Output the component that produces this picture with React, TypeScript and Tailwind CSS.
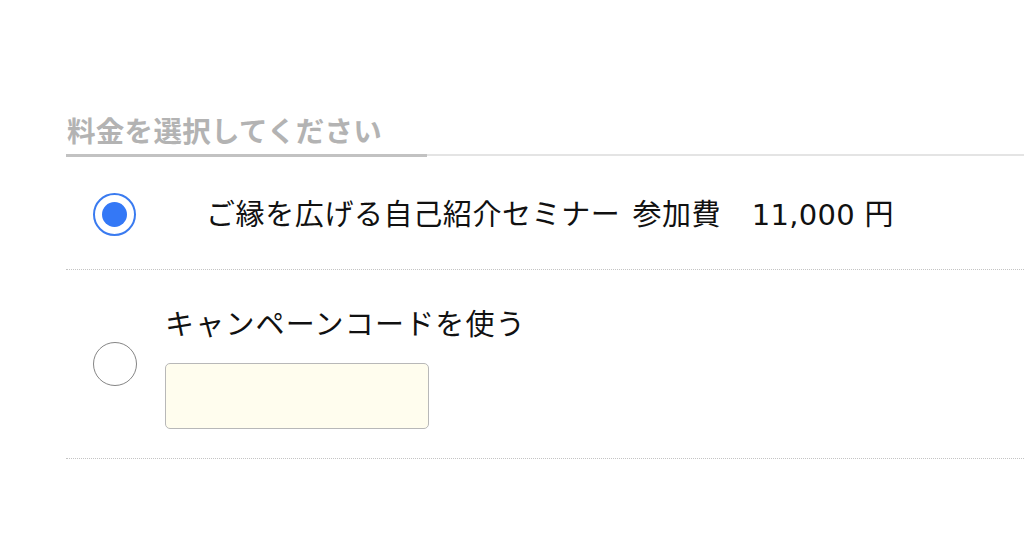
import React from "react";

function Radio({ checked }: { checked: boolean }) {
  return checked ? (
    <div className="w-[43px] h-[43px] mt-[4px] rounded-full border-2 border-[#3a7bf0] flex items-center justify-center shrink-0">
      <div className="w-[25px] h-[25px] rounded-full bg-[#3478f6]" />
    </div>
  ) : (
    <div className="w-[44px] h-[44px] rounded-full border-[1.5px] border-[#858585] shrink-0" />
  );
}

export default function App() {
  return (
    <div
      className="w-[1024px] h-[533px] bg-white overflow-hidden"
      style={{ fontFamily: '"Noto Sans CJK JP", "Noto Sans", sans-serif' }}
    >
      <div className="pt-[109px] pl-[66px]">
        <div className="border-b-2 border-[#e4e4e4]">
          <div className="w-[361px] -mb-[3px] border-b-[3px] border-[#c2c2c2] pl-[1px] pb-[4px]">
            <div className="text-[28.5px] leading-[41px] font-bold text-[#b3b3b3] tracking-[0.3px]">料金を選択してください</div>
          </div>
        </div>
        <div className="flex items-center h-[114px] pl-[27px] border-b border-dotted border-[#c4c4c4]">
          <Radio checked />
          <div className="ml-[70px] text-[29px] leading-[40px] text-[#111] tracking-[0.6px] pt-[2px]">
            ご縁を広げる自己紹介セミナー<span className="ml-[12px]">参加費</span>{"　"}
            <span style={{ fontFamily: '"DejaVu Sans", "Noto Sans CJK JP", sans-serif' }} className="ml-[1px] tracking-[0.3px]">
              11,000 円
            </span>
          </div>
        </div>
        <div className="flex items-center h-[189px] pl-[27px] border-b border-dotted border-[#c4c4c4]">
          <Radio checked={false} />
          <div className="ml-[28px] flex flex-col pt-[2px]">
            <div className="text-[29px] leading-[40px] text-[#111] tracking-[1.2px]">キャンペーンコードを使う</div>
            <div className="mt-[21px] w-[264px] h-[66px] rounded-[5px] border border-[#b8b8b8] bg-[#fffdee]" />
          </div>
        </div>
      </div>
    </div>
  );
}
